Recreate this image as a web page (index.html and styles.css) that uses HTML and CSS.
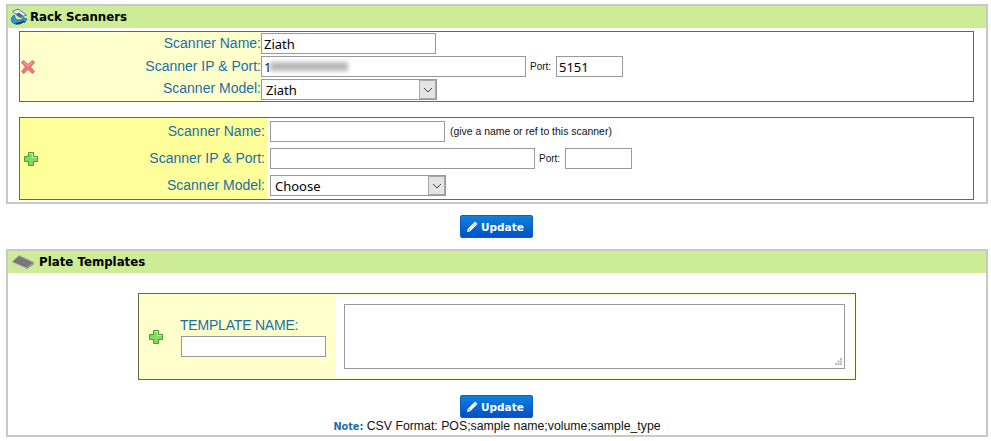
FILE: index.html
```html
<!DOCTYPE html>
<html lang="en">
<head>
<meta charset="utf-8">
<title>Rack Scanners</title>
<link rel="stylesheet" href="styles.css">
</head>
<body>
<section class="panel panel-scanners">
  <h2 class="panel-head">
    <svg class="head-icon" width="18" height="18" viewBox="0 0 18 18"><path d="M2.500 3.500 L8 1 L16.500 7 L10 9.500 Z" fill="#f2f7fc" stroke="#2b7fc4" stroke-width="1"/><path d="M5.500 6 L9 4.500 L13.500 8 L10 9.500 Z" fill="#5d666e"/><path d="M4 7 L5.500 10.500 Q6 12.500 10 12 L13 11 L12.500 9.500 L17 11 L14.500 15 L14 13.500 L10 15.500 Q3.500 17.500 1.500 13 Q0.500 9.500 4 7 Z" fill="#2f94e0" stroke="#1766a8" stroke-width=".8"/><path d="M5 15 L10 14 L14 12.500 L14.500 14 L10 16.200 L6 16.500 Z" fill="#2c3a46"/></svg>
    <span>Rack Scanners</span>
  </h2>
  <div class="scanner scanner-saved">
    <div class="scanner-side side-saved">
      <svg class="action-icon" width="16" height="16" viewBox="0 0 16 16"><path d="M1.500 3.500 L3.500 1.500 L8 5.500 L12.500 1.500 L14.500 3.500 L10.500 8 L14.500 12.500 L12.500 14.500 L8 10.500 L3.500 14.500 L1.500 12.500 L5.500 8 Z" fill="#f0787a" stroke="#d9696a" stroke-width="1"/><path d="M3.500 3 L8 7 L12.500 3" fill="none" stroke="#f9b0ae" stroke-width="1"/></svg>
      <div class="labels labels-saved">
        <label class="field-label">Scanner Name:</label>
        <label class="field-label">Scanner IP &amp; Port:</label>
        <label class="field-label">Scanner Model:</label>
      </div>
    </div>
    <div class="fields fields-saved">
      <div class="field-row"><input class="text-input w-name" type="text" value="Ziath"></div>
      <div class="field-row">
        <span class="ip-wrap"><input class="text-input w-ip" type="text" value="1"><span class="ip-blur"></span></span>
        <span class="port-label">Port:</span>
        <input class="text-input w-port" type="text" value="5151">
      </div>
      <div class="field-row"><span class="select-box w-select"><span class="select-text">Ziath</span><span class="select-arrow"><svg width="10" height="6" viewBox="0 0 10 6"><path d="M1 1 L5 5 L9 1" fill="none" stroke="#444" stroke-width="1"/></svg></span></span></div>
    </div>
  </div>
  <div class="scanner scanner-new">
    <div class="scanner-side side-new">
      <svg class="action-icon" width="16" height="16" viewBox="0 0 16 16"><path d="M5.500 1.500 H10.500 V5.500 H14.500 V10.500 H10.500 V14.500 H5.500 V10.500 H1.500 V5.500 H5.500 Z" fill="#86d860" stroke="#3da32e" stroke-width="1"/><path d="M6.500 2.500 H9.500 V6.500 H13.500" fill="none" stroke="#c8f0b0" stroke-width="1"/></svg>
      <div class="labels labels-new">
        <label class="field-label">Scanner Name:</label>
        <label class="field-label">Scanner IP &amp; Port:</label>
        <label class="field-label">Scanner Model:</label>
      </div>
    </div>
    <div class="fields fields-new">
      <div class="field-row"><input class="text-input w-name" type="text"><span class="hint">(give a name or ref to this scanner)</span></div>
      <div class="field-row">
        <input class="text-input w-ip" type="text">
        <span class="port-label">Port:</span>
        <input class="text-input w-port" type="text">
      </div>
      <div class="field-row"><span class="select-box w-select"><span class="select-text">Choose</span><span class="select-arrow"><svg width="10" height="6" viewBox="0 0 10 6"><path d="M1 1 L5 5 L9 1" fill="none" stroke="#444" stroke-width="1"/></svg></span></span></div>
    </div>
  </div>
</section>
<div class="actions actions-first">
  <button class="update-btn" type="button"><svg width="13" height="13" viewBox="0 0 13 13"><path d="M1 12 L1.800 8.800 L9 1.500 L11.500 4 L4.200 11.200 Z" fill="#fff"/><path d="M2.800 8.800 L4.200 10.200 M8 3.500 L9.500 5" stroke="#0a60c8" stroke-width=".7"/></svg><span class="btn-text">Update</span></button>
</div>
<section class="panel panel-templates">
  <h2 class="panel-head">
    <svg class="head-icon head-icon-wide" width="24" height="16" viewBox="0 0 24 16"><path d="M1 8 L8 1.500 L23 8.500 L15 14 Z" fill="#777" stroke="#b5b5b5" stroke-width=".8"/><path d="M1 8 L15 14 L15 15.500 L1 9.500 Z" fill="#d0d0d0"/><path d="M15 14 L23 8.500 L23 10 L15 15.500 Z" fill="#8d8d8d"/></svg>
    <span>Plate Templates</span>
  </h2>
  <div class="template">
    <div class="template-side">
      <svg class="action-icon" width="16" height="16" viewBox="0 0 16 16"><path d="M5.500 1.500 H10.500 V5.500 H14.500 V10.500 H10.500 V14.500 H5.500 V10.500 H1.500 V5.500 H5.500 Z" fill="#86d860" stroke="#3da32e" stroke-width="1"/><path d="M6.500 2.500 H9.500 V6.500 H13.500" fill="none" stroke="#c8f0b0" stroke-width="1"/></svg>
      <div class="template-name">
        <label class="field-label template-label">TEMPLATE NAME:</label>
        <input class="text-input w-template" type="text">
      </div>
    </div>
    <div class="template-main">
      <div class="fake-textarea"><svg class="grip" width="7" height="7" viewBox="0 0 7 7"><path d="M5 0h2v2H5zM2.500 2.500h2v2h-2zM5 2.500h2v2H5zM0 5h2v2H0zM2.500 5h2v2h-2zM5 5h2v2H5z" fill="#bbb"/></svg></div>
    </div>
  </div>
  <div class="actions actions-second">
    <button class="update-btn" type="button"><svg width="13" height="13" viewBox="0 0 13 13"><path d="M1 12 L1.800 8.800 L9 1.500 L11.500 4 L4.200 11.200 Z" fill="#fff"/><path d="M2.800 8.800 L4.200 10.200 M8 3.500 L9.500 5" stroke="#0a60c8" stroke-width=".7"/></svg><span class="btn-text">Update</span></button>
  </div>
  <p class="note"><strong>Note:</strong> CSV Format: POS;sample name;volume;sample_type</p>
</section>
</body>
</html>
```
FILE: styles.css
```css
* { box-sizing: border-box; }
html, body { margin: 0; padding: 0; }
body {
  padding: 4px 3px 0 6px;
  background: #fff;
  font-family: "Liberation Sans", Arial, sans-serif;
  overflow: hidden;
}
.panel { border: 2px solid #c8c8c8; background: #fff; }
.panel-scanners { height: 200px; }
.panel-templates { height: 188px; }
.panel-head {
  display: flex;
  align-items: center;
  margin: 0;
  height: 22px;
  background: #ccec96;
  font: bold 11.800px "DejaVu Sans", Verdana, sans-serif;
  color: #000;
}
.head-icon { margin-left: 2px; margin-right: 2px; flex: none; }
.head-icon-wide { margin-left: 3px; margin-right: 4px; }

.scanner {
  display: flex;
  margin-left: 11px;
  width: 955px;
  border: 1px solid #666;
}
.scanner-saved { margin-top: 3px; height: 71px; }
.scanner-new { margin-top: 15px; height: 83px; }
.scanner-side { display: flex; align-items: center; flex: none; }
.side-saved { width: 241px; background: #ffffcc; }
.side-new { width: 247px; background: #ffff99; padding-left: 3px; }
.labels { flex: 1; display: flex; flex-direction: column; align-items: flex-end; height: 100%; }
.labels-saved { gap: 4px; padding-top: 2px; }
.labels-saved .field-label:last-child { margin-top: -1px; }
.labels-new { gap: 6px; padding-top: 3px; padding-right: 2px; }
.labels-saved .field-label { height: 19px; line-height: 19px; }
.labels-new .field-label { height: 21px; line-height: 21px; }
.field-label { font-size: 14px; color: #1c6ea8; white-space: nowrap; }
.action-icon { flex: none; }

.fields { display: flex; flex-direction: column; }
.fields-saved { padding: 1px 0 0 0; gap: 2px; }
.fields-new { padding: 3px 0 0 3px; gap: 6px; }
.field-row { display: flex; align-items: center; }
.text-input {
  display: block;
  height: 21px;
  padding: 0 2px;
  border: 1px solid #999;
  border-radius: 0;
  background: #fff;
  font: 13px "Noto Sans", Tahoma, sans-serif;
  color: #000;
  outline: none;
}
.w-name { width: 175px; }
.w-ip { width: 265px; }
.w-port { width: 67px; }
.w-template { width: 145px; }
.ip-wrap { position: relative; display: block; }
.ip-blur {
  position: absolute;
  left: 9px;
  top: 6px;
  width: 78px;
  height: 9px;
  background: #b8b8b8;
  filter: blur(2px);
}
.port-label { width: 30px; padding-left: 4px; font-size: 10px; color: #111; }
.hint { margin-left: 5px; font-size: 10.450px; color: #111; }
.select-box {
  display: flex;
  align-items: center;
  justify-content: space-between;
  height: 21px;
  border: 1px solid #999;
  background: #fff;
}
.w-select { width: 176px; }
.select-text { padding-left: 4px; font: 13px "Noto Sans", Tahoma, sans-serif; color: #000; }
.select-arrow {
  display: flex;
  align-items: center;
  justify-content: center;
  width: 17px;
  height: 19px;
  background: #e4e4e4;
  border: 1px solid #a8a8a8;
}
.actions { display: flex; justify-content: center; }
.actions-first { margin: 11px 0; padding-right: 1px; }
.actions-second { margin-top: 15px; padding-right: 1px; }
.update-btn {
  display: flex;
  align-items: center;
  gap: 2px;
  width: 73px;
  height: 23px;
  padding: 0 0 0 5px;
  border: 1px solid #0a5fc4;
  border-radius: 2px;
  background: linear-gradient(#0f82dc, #0050c8);
  font: bold 10.500px "DejaVu Sans", Verdana, sans-serif;
  color: #fff;
}
.btn-text { padding-top: 1px; }
.template {
  display: flex;
  margin: 20px 0 0 130px;
  width: 718px;
  height: 87px;
  border: 1px solid #666650;
  padding: 2px 1px 2px 0;
  background: #ffffcc;
}
.template-side { display: flex; align-items: center; width: 197px; flex: none; padding-left: 9px; }
.template-name { display: flex; flex-direction: column; gap: 3px; margin-left: 16px; }
.template-label { letter-spacing: -0.2px; }
.template-name .w-template { margin-left: 1px; height: 21px; }
.template-main { flex: 1; background: #fff; padding: 8px 9px 0 8px; }
.fake-textarea {
  position: relative;
  height: 65px;
  border: 1px solid #999;
  background: #fff;
}
.grip { position: absolute; right: 2px; bottom: 3px; }
.note { margin: 1px 0 0; text-align: center; font-size: 12.300px; color: #111; }
.note strong { font: bold 9.700px "DejaVu Sans", Verdana, sans-serif; color: #1c6ea8; }
```
